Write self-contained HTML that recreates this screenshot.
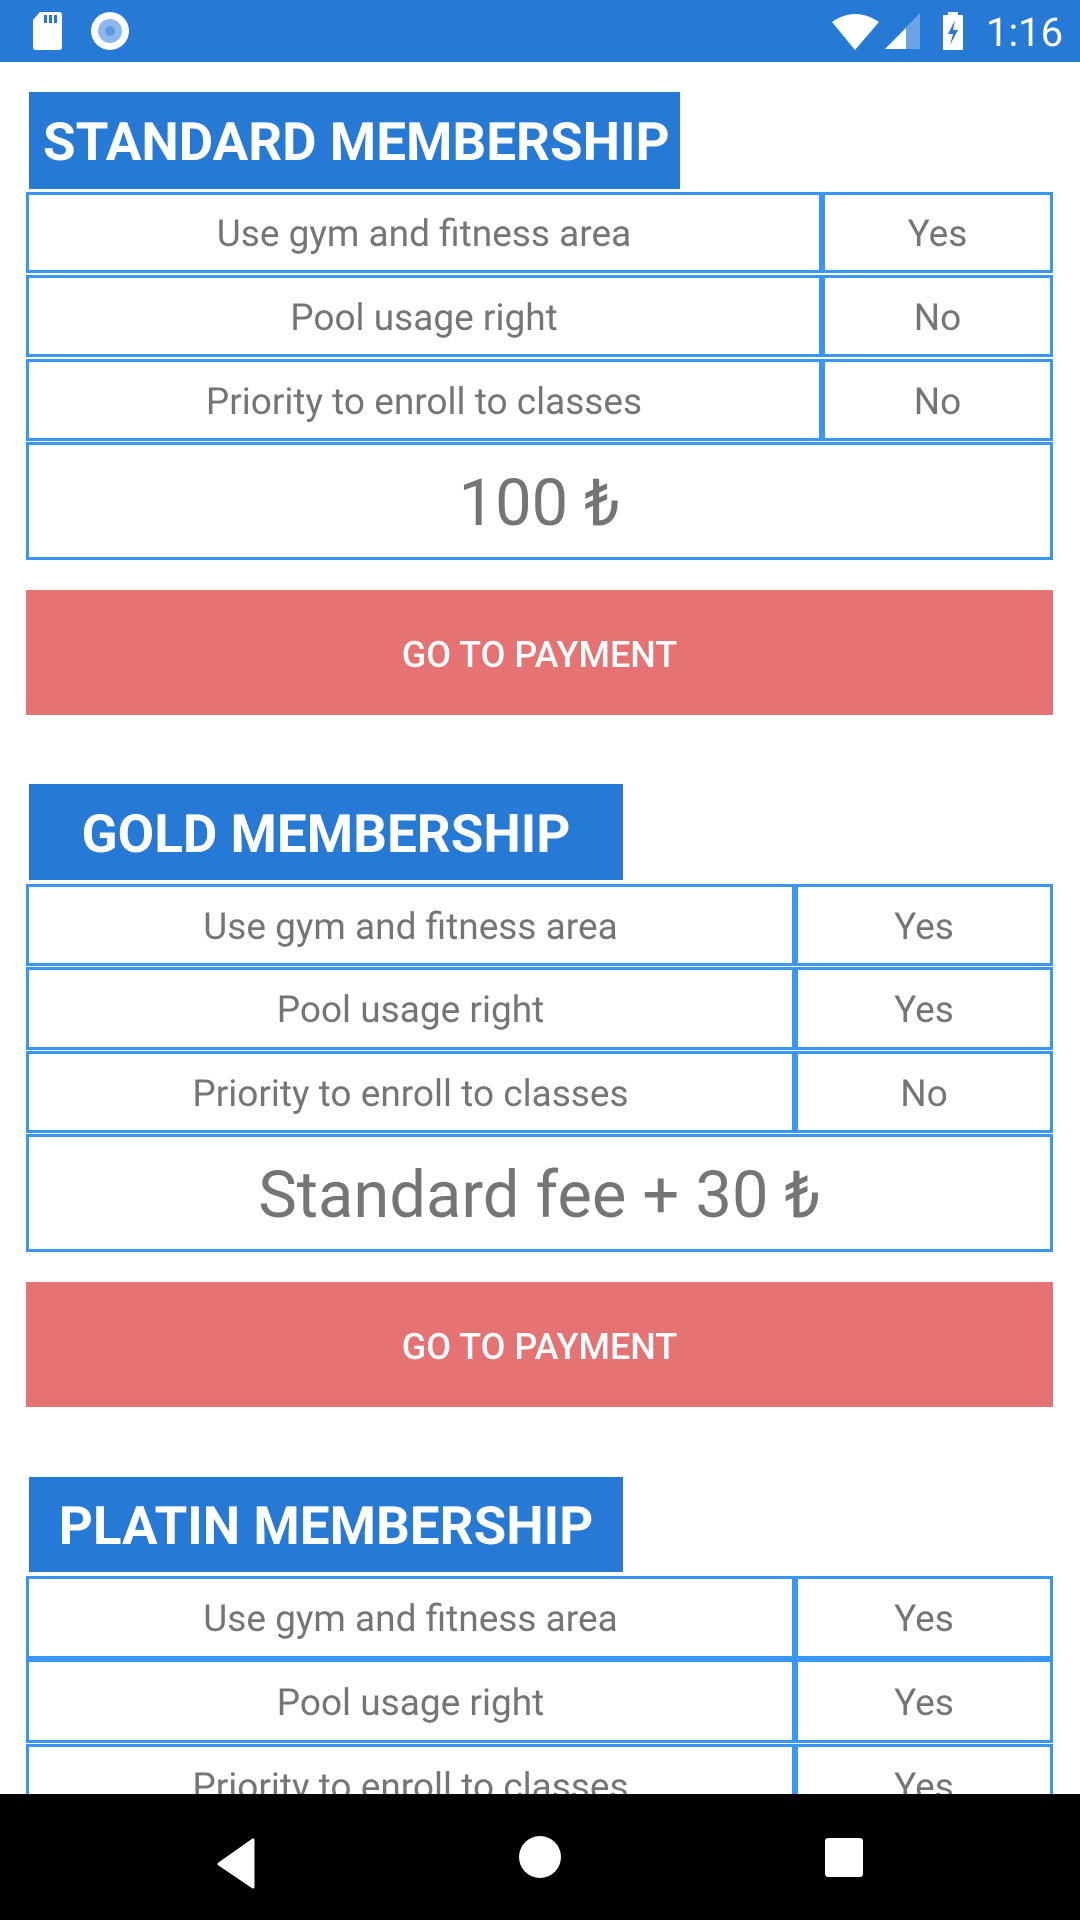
<!DOCTYPE html>
<html><head><meta charset="utf-8"><style>
*{margin:0;padding:0;box-sizing:border-box}
body{width:1080px;height:1920px;background:#fff;position:relative;overflow:hidden;font-family:"Roboto","Liberation Sans",sans-serif}
.a{position:absolute}
.hdr{position:absolute;background:#2779d6;color:#fff;font-weight:bold;font-size:53px;line-height:1;display:flex;align-items:center;padding-top:4px}
.c{position:absolute;border:3px solid #3a96f5;color:#757575;font-size:37px;display:flex;align-items:center;justify-content:center;background:#fff;padding-top:4px}
.btn{position:absolute;left:26px;width:1027px;height:125px;background:#e57373;color:#fff;font-size:36px;font-weight:500;display:flex;align-items:center;justify-content:center;padding-top:4px}
</style></head><body>
<div class="a" style="left:0;top:0;width:1080px;height:62px;background:#2779d6"></div>
<svg class="a" style="left:0;top:0" width="1080" height="62">
<path d="M40 12 H59 Q62 12 62 15 V47 Q62 50 59 50 H36 Q33 50 33 47 V20 Z" fill="#fff"/>
<rect x="44" y="15" width="3" height="8" fill="#2779d6"/><rect x="49" y="15" width="3" height="8" fill="#2779d6"/><rect x="54" y="15" width="3" height="8" fill="#2779d6"/>
<circle cx="110" cy="31" r="19" fill="#fff"/><circle cx="110" cy="31" r="12" fill="#8db8ec"/><circle cx="110" cy="31" r="5" fill="#5b9be2"/>
<path d="M832 22 Q855 6 879 22 L855 50 Z" fill="#fff"/>
<path d="M885 49 L920 13 V49 Z" fill="#6aa3e3"/><path d="M885 49 L906 28 V49 Z" fill="#fff"/>
<rect x="943" y="15" width="20" height="35" fill="#fff"/><rect x="948" y="12" width="10" height="4" fill="#fff"/>
<path d="M955 20 L948 34 H953 L950 45 L958 30 H953 Z" fill="#2779d6"/>
<text x="986" y="46" fill="#fff" font-size="40" font-family="Roboto,Liberation Sans">1:16</text>
</svg>

<div class="hdr" style="left:29px;top:92px;width:651px;height:97px;padding-left:14px">STANDARD MEMBERSHIP</div>
<div class="c" style="left:26px;top:192px;width:796px;height:81px">Use gym and fitness area</div>
<div class="c" style="left:822px;top:192px;width:231px;height:81px">Yes</div>
<div class="c" style="left:26px;top:275px;width:796px;height:82px">Pool usage right</div>
<div class="c" style="left:822px;top:275px;width:231px;height:82px">No</div>
<div class="c" style="left:26px;top:359px;width:796px;height:82px">Priority to enroll to classes</div>
<div class="c" style="left:822px;top:359px;width:231px;height:82px">No</div>
<div class="c" style="left:26px;top:442px;width:1027px;height:118px;font-size:65px">100 ₺</div>
<div class="btn" style="top:590px">GO TO PAYMENT</div>

<div class="hdr" style="left:29px;top:784px;width:594px;height:96px;justify-content:center">GOLD MEMBERSHIP</div>
<div class="c" style="left:26px;top:884px;width:769px;height:82px">Use gym and fitness area</div>
<div class="c" style="left:795px;top:884px;width:258px;height:82px">Yes</div>
<div class="c" style="left:26px;top:967px;width:769px;height:83px">Pool usage right</div>
<div class="c" style="left:795px;top:967px;width:258px;height:83px">Yes</div>
<div class="c" style="left:26px;top:1051px;width:769px;height:82px">Priority to enroll to classes</div>
<div class="c" style="left:795px;top:1051px;width:258px;height:82px">No</div>
<div class="c" style="left:26px;top:1134px;width:1027px;height:118px;font-size:65px">Standard fee + 30 ₺</div>
<div class="btn" style="top:1282px">GO TO PAYMENT</div>

<div class="hdr" style="left:29px;top:1477px;width:594px;height:95px;justify-content:center">PLATIN MEMBERSHIP</div>
<div class="c" style="left:26px;top:1576px;width:769px;height:83px">Use gym and fitness area</div>
<div class="c" style="left:795px;top:1576px;width:258px;height:83px">Yes</div>
<div class="c" style="left:26px;top:1659px;width:769px;height:84px">Pool usage right</div>
<div class="c" style="left:795px;top:1659px;width:258px;height:84px">Yes</div>
<div class="c" style="left:26px;top:1744px;width:769px;height:82px">Priority to enroll to classes</div>
<div class="c" style="left:795px;top:1744px;width:258px;height:82px">Yes</div>

<div class="a" style="left:0;top:1794px;width:1080px;height:126px;background:#000"></div>
<svg class="a" style="left:0;top:1794px" width="1080" height="126">
<path d="M253 46 V93 L219 70 Z" fill="#fff" stroke="#fff" stroke-width="3" stroke-linejoin="round"/>
<circle cx="540" cy="63" r="21" fill="#fff"/>
<rect x="825" y="44" width="38" height="39" rx="3" fill="#fff"/>
</svg>
</body></html>
